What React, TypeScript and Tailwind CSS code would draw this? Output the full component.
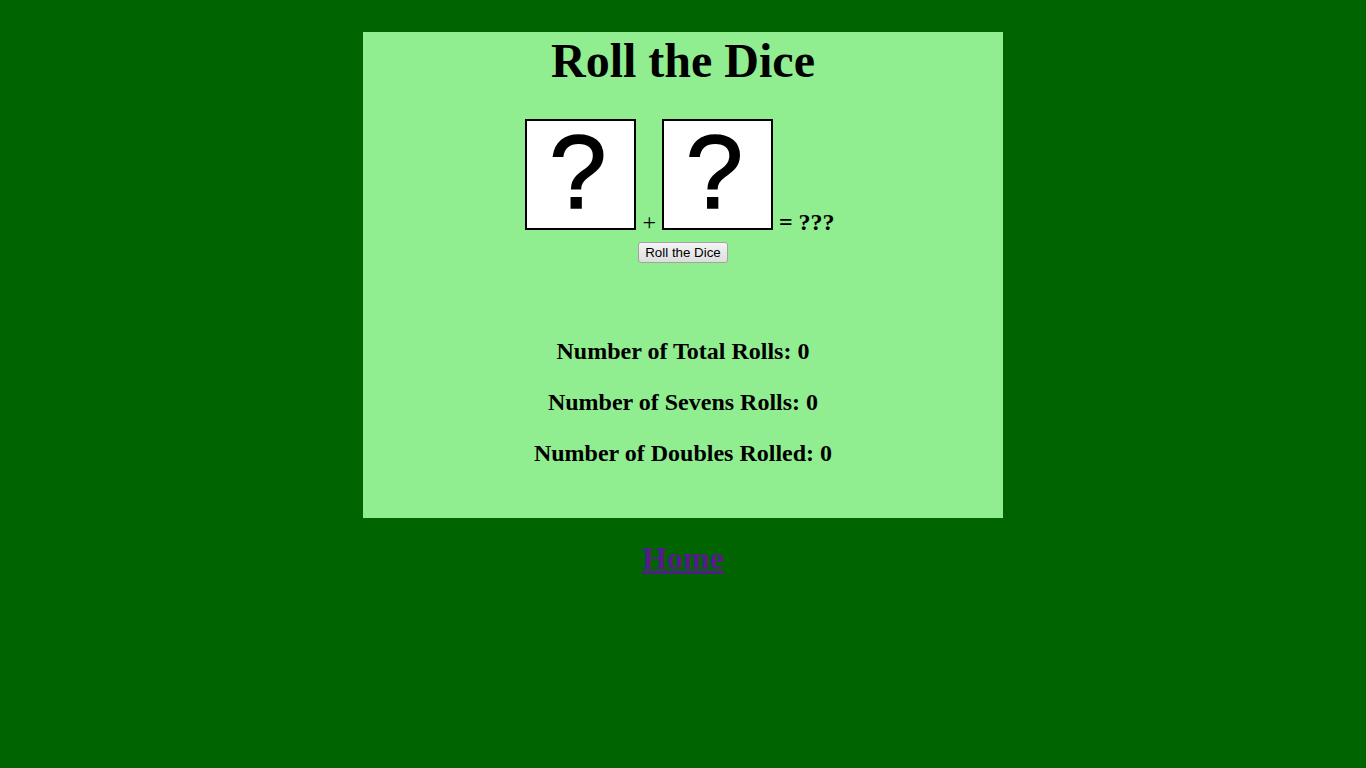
import React from "react";

function Die() {
  return (
    <span className="inline-block overflow-hidden align-baseline w-[111px] h-[111px] border-2 border-black bg-white">
      <span className="flex w-full h-full items-center justify-center pr-[6px] pb-[5px] font-['Liberation_Sans',Arial,sans-serif] font-normal text-[103px] leading-none text-black [-webkit-text-stroke:1.5px_black]">
        ?
      </span>
    </span>
  );
}

export default function App() {
  return (
    <div className="min-h-[768px] w-full bg-[#006400] pt-[32px] flex flex-col items-center font-['Liberation_Serif','Times_New_Roman',serif] text-black">
      <div className="w-[640px] bg-[#90EE90] text-center pb-[39px]">
        <h1 className="pt-[2px] text-[48px] font-bold leading-[53px]">Roll the Dice</h1>
        <div className="mt-[32px] pr-[6px] text-[24px] leading-[24px] font-bold whitespace-nowrap">
          <Die /> <span className="font-normal">+</span> <Die /> = ???
        </div>
        <div className="mt-[8px] flex justify-center">
          <button
            type="button"
            className="h-[21px] px-[6px] border border-[#a3a3a3] rounded-[3px] bg-gradient-to-b from-[#f4f4f4] to-[#dedede] font-['Liberation_Sans',Arial,sans-serif] text-[13.33px] leading-[17px] text-black"
          >
            Roll the Dice
          </button>
        </div>
        <div className="mt-[63px] text-[24px] font-bold leading-[51px]">
          <div>Number of Total Rolls: 0</div>
          <div>Number of Sevens Rolls: 0</div>
          <div>Number of Doubles Rolled: 0</div>
        </div>
      </div>
      <a
        href="#"
        className="mt-[22.5px] text-[32px] font-bold leading-[35px] text-[#551A8B] underline"
      >
        Home
      </a>
    </div>
  );
}
